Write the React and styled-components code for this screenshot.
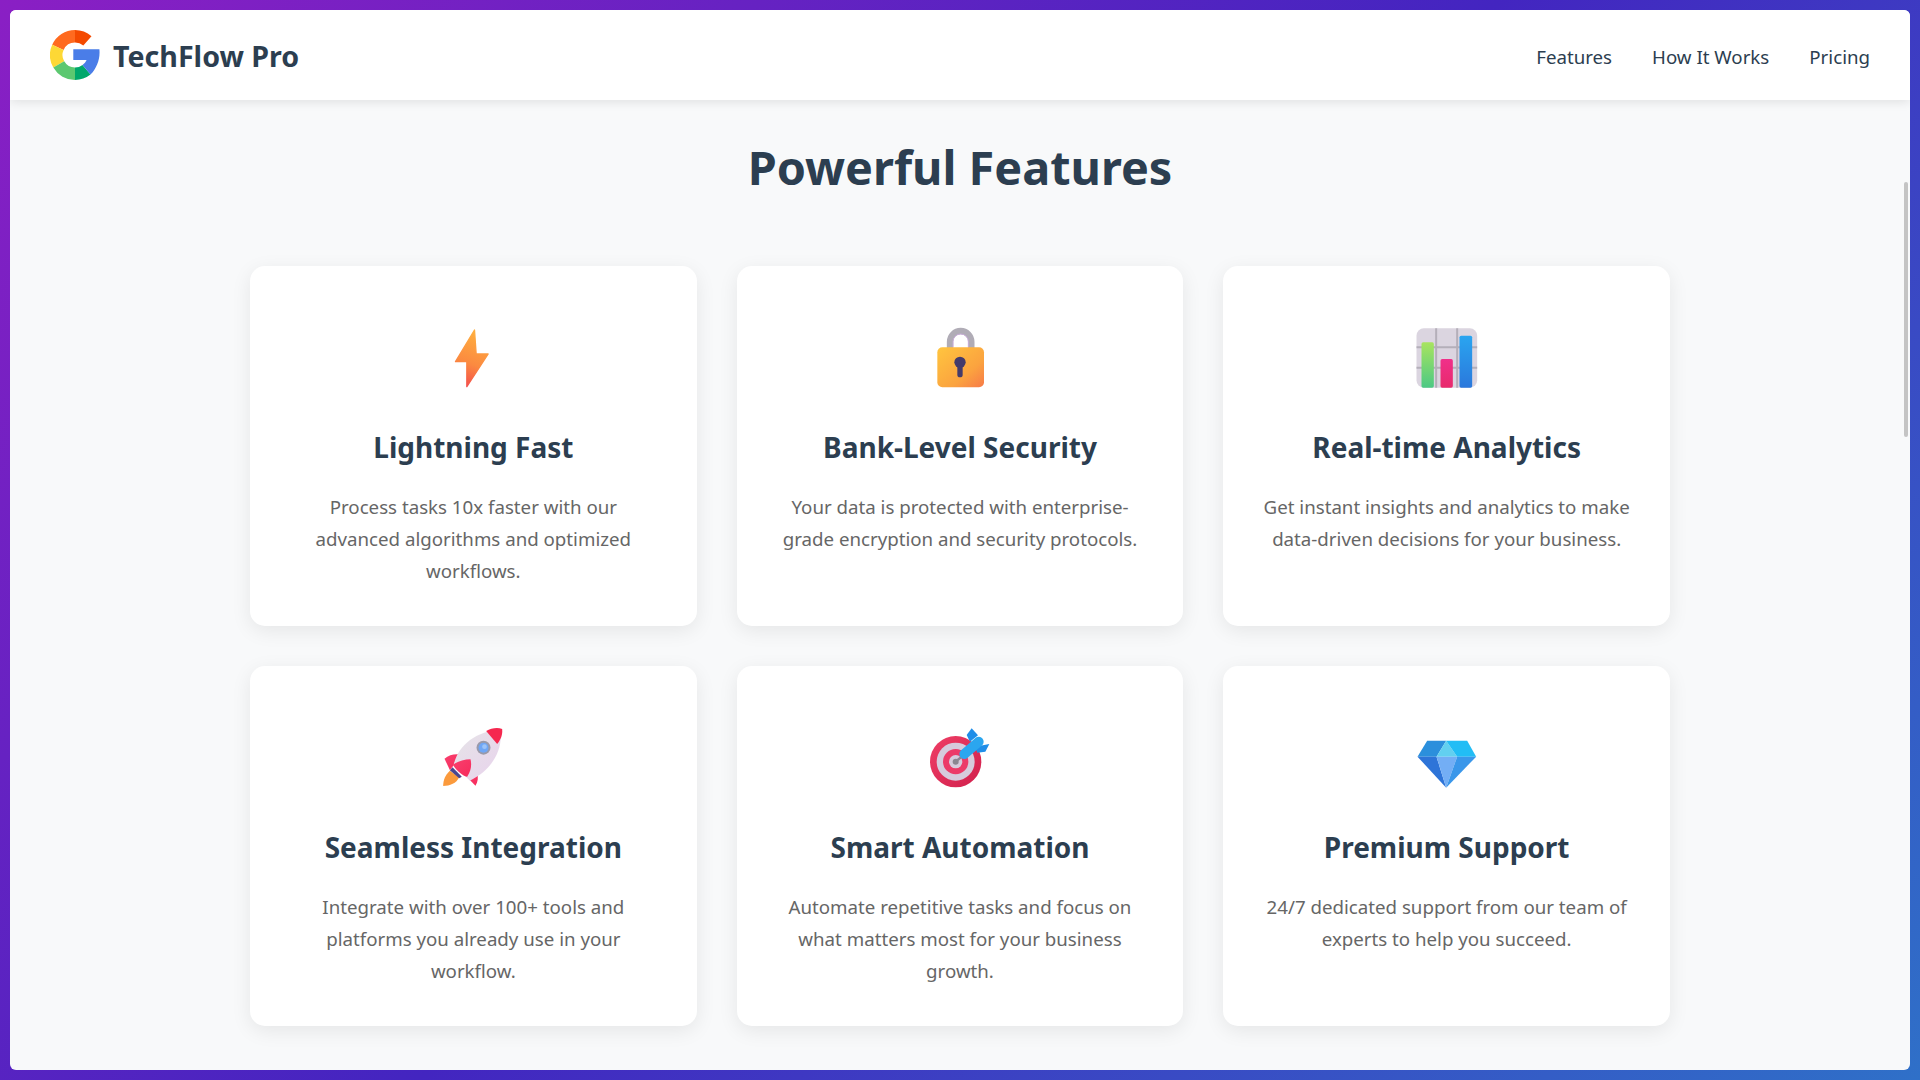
import React from 'react';
import styled, { createGlobalStyle } from 'styled-components';

const GlobalStyle = createGlobalStyle`
  * {
    box-sizing: border-box;
  }
  html, body {
    margin: 0;
    height: 100%;
    overflow: hidden;
    font-family: "Noto Sans", "Open Sans", sans-serif;
  }
`;

const Frame = styled.div`
  height: 100vh;
  padding: 10px;
  background: linear-gradient(135deg, #8a1fc4 0%, #4325c0 50%, #2f70c8 100%);
`;

const Window = styled.div`
  position: relative;
  display: flex;
  flex-direction: column;
  height: 100%;
  overflow: hidden;
  background: #f8f9fa;
  border-radius: 6px;
`;

const Header = styled.header`
  position: relative;
  z-index: 1;
  display: flex;
  flex: none;
  align-items: center;
  justify-content: space-between;
  height: 90px;
  padding: 0 40px;
  background: #fff;
  box-shadow: 0 2px 10px rgba(0, 0, 0, 0.1);
`;

const Logo = styled.div`
  display: flex;
  align-items: center;
  gap: 13px;
  font-size: 28.6px;
  font-weight: 700;
  color: #2c3e50;
`;

const Nav = styled.nav`
  display: flex;
  gap: 40px;
  padding-top: 2px;
`;

const NavLink = styled.a`
  font-size: 18.7px;
  color: #2c3e50;
  text-decoration: none;
`;

const Main = styled.main`
  flex: 1;
  padding: 31px 0 0;
`;

const Title = styled.h1`
  margin: 0 0 63px;
  font-size: 46.8px;
  line-height: 72px;
  font-weight: 700;
  text-align: center;
  color: #2c3e50;
`;

const Grid = styled.div`
  display: grid;
  grid-template-columns: repeat(3, 1fr);
  gap: 40px;
  width: 1420px;
  margin: 0 auto;
`;

const Card = styled.article`
  height: 360px;
  padding: 40px 38px;
  background: #fff;
  border-radius: 15px;
  box-shadow: 0 5px 20px rgba(0, 0, 0, 0.08);
  text-align: center;
`;

const IconBox = styled.div`
  display: flex;
  justify-content: center;
  padding-top: 16px;
  height: 98px;
`;

const CardTitle = styled.h3`
  margin: 24px 0 25px;
  font-size: 28px;
  line-height: 38px;
  font-weight: 700;
  color: #2c3e50;
`;

const CardText = styled.p`
  margin: 0;
  font-size: 18.7px;
  line-height: 32px;
  color: #666;
`;

const ScrollThumb = styled.div`
  position: absolute;
  top: 172px;
  right: 2px;
  width: 4px;
  height: 255px;
  background: #c4c4c4;
  border-radius: 2px;
`;

function GoogleMark() {
  return (
    <svg width="50" height="50" viewBox="0 0 50 50">
      <path d="M25 0A25 25 0 0 1 41.5 6.2L33.3 15.5A12.5 12.5 0 0 0 25 12.5Z" fill="#f44a00" />
      <path d="M25 0A25 25 0 0 0 2.2 14.8L13.6 19.9A12.5 12.5 0 0 1 25 12.5Z" fill="#ff6a1f" />
      <path d="M2.2 14.8A25 25 0 0 0 3.3 37.5L14.2 31.3A12.5 12.5 0 0 1 13.6 19.9Z" fill="#fdd835" />
      <path d="M3.3 37.5A25 25 0 0 0 25 50V37.5A12.5 12.5 0 0 1 14.2 31.3Z" fill="#5cc870" />
      <path d="M25 50A25 25 0 0 0 40.5 44.6L32.5 35A12.5 12.5 0 0 1 25 37.5Z" fill="#00a86b" />
      <path d="M23.3 19.3H49.4C50.4 28.8 46.8 38.2 40.5 44.6L32.5 35C34.5 33.5 35.8 31.9 36.6 30H23.3Z" fill="#4a7de8" />
    </svg>
  );
}

function IconFrame({ x, y, children }) {
  return (
    <svg width="72" height="72" viewBox={`${x} ${y} 216 216`}>
      {children}
    </svg>
  );
}

function BoltIcon() {
  return (
    <IconFrame x={22.5} y={36}>
      <defs>
        <linearGradient id="bolt" x1="0.6" y1="0" x2="0.4" y2="1">
          <stop offset="0" stopColor="#ffb03f" />
          <stop offset="0.6" stopColor="#fb8a40" />
          <stop offset="1" stopColor="#f4504c" />
        </linearGradient>
      </defs>
      <path
        d="M135 60L78 155H112V230L176 132H140Z"
        fill="url(#bolt)"
        stroke="url(#bolt)"
        strokeWidth="4"
        strokeLinejoin="round"
      />
    </IconFrame>
  );
}

function LockIcon() {
  return (
    <IconFrame x={12} y={36}>
      <defs>
        <linearGradient id="lockBody" x1="0" y1="0" x2="1" y2="1">
          <stop offset="0" stopColor="#ffc53f" />
          <stop offset="0.65" stopColor="#fba33f" />
          <stop offset="1" stopColor="#f77a48" />
        </linearGradient>
      </defs>
      <path d="M90 115V95A32 32 0 0 1 154 95V115" fill="none" stroke="#b0acb6" strokeWidth="19" />
      <path d="M99 112V95A23 23 0 0 1 145 95V112" fill="none" stroke="#c7aad8" strokeWidth="3" />
      <rect x="52" y="112" width="140" height="120" rx="15" fill="url(#lockBody)" />
      <circle cx="120" cy="157" r="17" fill="#433a6b" />
      <rect x="112" y="160" width="16" height="42" rx="8" fill="#433a6b" />
    </IconFrame>
  );
}

function ChartIcon() {
  return (
    <IconFrame x={16.5} y={21}>
      <defs>
        <linearGradient id="barGreen" x1="0" y1="0" x2="0" y2="1">
          <stop offset="0" stopColor="#a8e45f" />
          <stop offset="1" stopColor="#4cc984" />
        </linearGradient>
        <linearGradient id="barPink" x1="0" y1="0" x2="0" y2="1">
          <stop offset="0" stopColor="#f0308a" />
          <stop offset="1" stopColor="#e82a6c" />
        </linearGradient>
        <linearGradient id="barBlue" x1="0" y1="0" x2="0" y2="1">
          <stop offset="0" stopColor="#2aa5f0" />
          <stop offset="1" stopColor="#2a78dc" />
        </linearGradient>
      </defs>
      <rect x="33" y="40" width="182" height="178" rx="22" fill="#dbd5e0" />
      <path d="M92 40V218M155 40V218M33 97H215M33 158H215" stroke="#b4afb9" strokeWidth="6" />
      <rect x="48" y="82" width="37" height="136" rx="5" fill="url(#barGreen)" />
      <rect x="105" y="132" width="37" height="86" rx="5" fill="url(#barPink)" />
      <rect x="162" y="62" width="38" height="156" rx="5" fill="url(#barBlue)" />
    </IconFrame>
  );
}

function RocketIcon() {
  return (
    <IconFrame x={7.5} y={6}>
      <defs>
        <linearGradient id="rocketBody" x1="0.2" y1="0.1" x2="0.9" y2="0.9">
          <stop offset="0" stopColor="#e6e2e8" />
          <stop offset="1" stopColor="#e8d4ec" />
        </linearGradient>
        <linearGradient id="rocketFin" x1="0" y1="0" x2="1" y2="1">
          <stop offset="0" stopColor="#f8406e" />
          <stop offset="1" stopColor="#f72a5c" />
        </linearGradient>
      </defs>
      <path d="M46 152L74 172C66 190 46 198 26 198C26 180 32 165 46 152Z" fill="#fb9a3c" />
      <path d="M46 151L54 142L82 170L74 175Z" fill="#4a4690" />
      <path d="M30 116C42 106 56 102 72 103L56 138L46 150Z" fill="url(#rocketFin)" />
      <path d="M98 172L128 158C132 172 130 186 123 197Z" fill="url(#rocketFin)" />
      <path d="M58 132C72 72 130 32 197 29C207 90 172 150 106 182Z" fill="url(#rocketBody)" />
      <path d="M155 33C170 24 190 22 203 27C205 45 198 60 188 72Z" fill="#f5284f" />
      <path d="M55 134C70 124 90 118 108 118C112 135 110 152 98 170C88 170 66 152 55 134Z" fill="url(#rocketFin)" />
      <circle cx="147" cy="83" r="21" fill="#9a9aaa" />
      <circle cx="147" cy="83" r="15" fill="#6fa6f5" />
      <circle cx="150" cy="80" r="7" fill="#9cc3f8" />
    </IconFrame>
  );
}

function TargetIcon() {
  return (
    <IconFrame x={12} y={6}>
      <defs>
        <linearGradient id="targetRing" x1="0" y1="0" x2="1" y2="1">
          <stop offset="0" stopColor="#ef3f66" />
          <stop offset="1" stopColor="#d11f4c" />
        </linearGradient>
      </defs>
      <circle cx="107" cy="125" r="77" fill="url(#targetRing)" />
      <circle cx="107" cy="125" r="57" fill="#d6cbdc" />
      <circle cx="107" cy="125" r="38" fill="#ec3a68" />
      <circle cx="107" cy="125" r="20" fill="#d6cbdc" />
      <circle cx="107" cy="125" r="9" fill="#8b8691" />
      <path d="M107 125L135 102" stroke="#8b8691" strokeWidth="7" />
      <path d="M150 65L140 45L155 25L174 46Z" fill="#1f8ee8" />
      <path d="M165 80L208 72L196 95L172 98Z" fill="#1f8ee8" />
      <path d="M133 102L176 65" stroke="#2ba6ef" strokeWidth="30" strokeLinecap="round" />
    </IconFrame>
  );
}

function DiamondIcon() {
  return (
    <IconFrame x={16.5} y={-9}>
      <path d="M65 47H122L93 95H36Z" fill="#2b8fdc" />
      <path d="M122 47L155 95H93Z" fill="#62d0f0" />
      <path d="M122 47H185L212 95H155Z" fill="#22bdf5" />
      <path d="M36 95H93L122 188Z" fill="#2e74d8" />
      <path d="M93 95H155L122 188Z" fill="#73aef5" />
      <path d="M155 95H212L122 188Z" fill="#3a97ea" />
    </IconFrame>
  );
}

const features = [
  {
    icon: <BoltIcon />,
    title: 'Lightning Fast',
    text: 'Process tasks 10x faster with our advanced algorithms and optimized workflows.',
  },
  {
    icon: <LockIcon />,
    title: 'Bank-Level Security',
    text: 'Your data is protected with enterprise-grade encryption and security protocols.',
  },
  {
    icon: <ChartIcon />,
    title: 'Real-time Analytics',
    text: 'Get instant insights and analytics to make data-driven decisions for your business.',
  },
  {
    icon: <RocketIcon />,
    title: 'Seamless Integration',
    text: 'Integrate with over 100+ tools and platforms you already use in your workflow.',
  },
  {
    icon: <TargetIcon />,
    title: 'Smart Automation',
    text: 'Automate repetitive tasks and focus on what matters most for your business growth.',
  },
  {
    icon: <DiamondIcon />,
    title: 'Premium Support',
    text: '24/7 dedicated support from our team of experts to help you succeed.',
  },
];

export default function App() {
  return (
    <Frame>
      <GlobalStyle />
      <Window>
        <Header>
          <Logo>
            <GoogleMark />
            TechFlow Pro
          </Logo>
          <Nav>
            <NavLink href="#features">Features</NavLink>
            <NavLink href="#how">How It Works</NavLink>
            <NavLink href="#pricing">Pricing</NavLink>
          </Nav>
        </Header>
        <Main>
          <Title>Powerful Features</Title>
          <Grid>
            {features.map(f => (
              <Card key={f.title}>
                <IconBox>{f.icon}</IconBox>
                <CardTitle>{f.title}</CardTitle>
                <CardText>{f.text}</CardText>
              </Card>
            ))}
          </Grid>
        </Main>
        <ScrollThumb />
      </Window>
    </Frame>
  );
}
